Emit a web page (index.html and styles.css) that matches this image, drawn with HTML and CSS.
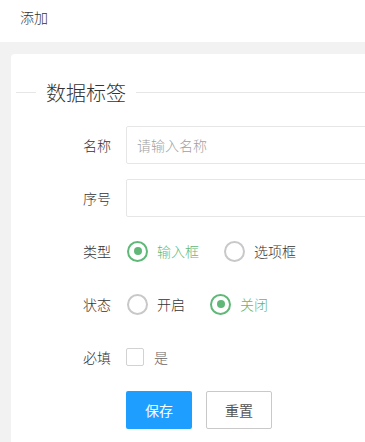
FILE: index.html
```html
<!DOCTYPE html>
<html lang="zh-CN">
<head>
    <meta charset="UTF-8">
    <meta name="viewport" content="width=device-width, initial-scale=1.0">
    <title>添加</title>
    <link rel="stylesheet" href="styles.css">
</head>
<body>

    <!-- 顶部标题栏 -->
    <div class="page-header">添加</div>

    <div class="page-body">
        <div class="card">

            <!-- 分组标题 -->
            <div class="field-title">数据标签</div>

            <form class="form">
                <div class="form-item">
                    <label class="form-label">名称</label>
                    <div class="form-block">
                        <input type="text" class="form-input" placeholder="请输入名称">
                    </div>
                </div>

                <div class="form-item">
                    <label class="form-label">序号</label>
                    <div class="form-block">
                        <input type="text" class="form-input">
                    </div>
                </div>

                <div class="form-item">
                    <label class="form-label">类型</label>
                    <div class="form-block">
                        <span class="radio checked"><i class="radio-icon"></i>输入框</span>
                        <span class="radio"><i class="radio-icon"></i>选项框</span>
                    </div>
                </div>

                <div class="form-item">
                    <label class="form-label">状态</label>
                    <div class="form-block">
                        <span class="radio"><i class="radio-icon"></i>开启</span>
                        <span class="radio checked"><i class="radio-icon"></i>关闭</span>
                    </div>
                </div>

                <div class="form-item">
                    <label class="form-label">必填</label>
                    <div class="form-block">
                        <span class="checkbox"><i class="checkbox-icon"></i>是</span>
                    </div>
                </div>

                <div class="form-item">
                    <div class="form-label"></div>
                    <div class="form-block">
                        <button type="button" class="btn btn-blue">保存</button>
                        <button type="reset" class="btn btn-plain">重置</button>
                    </div>
                </div>
            </form>

        </div>
    </div>

</body>
</html>
```

FILE: styles.css
```css
/* 基础样式 */
body, html {
    margin: 0;
    padding: 0;
    width: 100%;
    height: 100%;
    overflow: hidden;
    background: #fff;
    color: #333;
    font-family: "Noto Sans CJK SC", "Liberation Sans", sans-serif;
    font-size: 14px;
    font-weight: 300;
}

/* 顶部标题栏 */
.page-header {
    height: 42px;
    line-height: 35px;
    padding-left: 20px;
    background: #fff;
    color: #333;
}

/* 灰色内容区 */
.page-body {
    height: calc(100% - 42px);
    background: #f2f2f2;
    padding: 12px 0 0 11px;
    box-sizing: border-box;
}

.card {
    background: #fff;
    border-radius: 4px 0 0 0;
    padding: 24px 0 0 5px;
    height: 100%;
    box-sizing: border-box;
    overflow: hidden;
}

/* 分组标题（带横线） */
.field-title {
    display: flex;
    align-items: center;
    height: 28px;
    font-size: 20px;
    font-weight: 300;
    color: #333;
    margin-bottom: 20px;
}

.field-title::before,
.field-title::after {
    content: "";
    height: 1px;
    background: #e6e6e6;
}

.field-title::before {
    width: 20px;
    margin-right: 10px;
}

.field-title::after {
    flex: 1;
    margin-left: 10px;
}

/* 表单 */
.form-item {
    display: flex;
    align-items: center;
    min-height: 38px;
    margin-bottom: 15px;
}

.form-label {
    width: 110px;
    padding-right: 15px;
    box-sizing: border-box;
    text-align: right;
    color: #333;
    flex-shrink: 0;
}

.form-block {
    flex: 1;
    display: flex;
    align-items: center;
    min-width: 0;
}

.form-input {
    width: calc(100% + 6px);
    flex-shrink: 0;
    height: 38px;
    box-sizing: border-box;
    border: 1px solid #e6e6e6;
    border-radius: 2px;
    padding: 0 10px;
    font-family: inherit;
    font-weight: 300;
    font-size: 14px;
    color: #333;
    outline: none;
}

.form-input::placeholder {
    color: #a0a0a0;
}

/* 单选框 */
.radio {
    display: inline-flex;
    align-items: center;
    margin-right: 24px;
    color: #333;
}

.radio-icon {
    width: 21px;
    height: 21px;
    box-sizing: border-box;
    border: 2px solid #c8c8c8;
    border-radius: 50%;
    margin: 0 9px 0 1px;
    position: relative;
}

.radio.checked {
    color: #5fb878;
}

.radio.checked .radio-icon {
    border-color: #5fb878;
}

.radio.checked .radio-icon::after {
    content: "";
    position: absolute;
    top: 4.5px;
    left: 4.5px;
    width: 8px;
    height: 8px;
    border-radius: 50%;
    background: #5fb878;
}

/* 复选框 */
.checkbox {
    display: inline-flex;
    align-items: center;
    color: #666;
}

.checkbox-icon {
    width: 18px;
    height: 18px;
    box-sizing: border-box;
    border: 1px solid #d2d2d2;
    border-radius: 2px;
    margin-right: 10px;
}

/* 按钮 */
.btn {
    height: 38px;
    padding: 0 18px;
    border: 1px solid transparent;
    border-radius: 2px;
    font-family: inherit;
    font-weight: 400;
    font-size: 14px;
    cursor: pointer;
}

.btn-blue {
    background: #1e9fff;
    color: #fff;
}

.btn-plain {
    background: #fff;
    border-color: #c9c9c9;
    color: #555;
    margin-left: 14px;
}
```
